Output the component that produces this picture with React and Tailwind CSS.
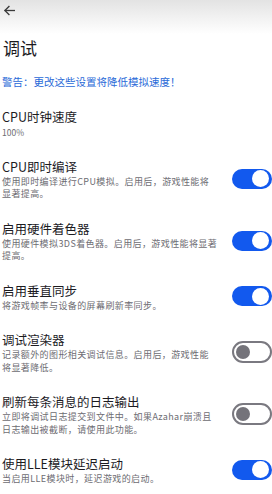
import React from 'react';

const items = [
    { title: 'CPU即时编译', desc: '使用即时编译进行CPU模拟。启用后，游戏性能将\n显著提高。', on: true },
    { title: '启用硬件着色器', desc: '使用硬件模拟3DS着色器。启用后，游戏性能将显著\n提高。', on: true },
    { title: '启用垂直同步', desc: '将游戏帧率与设备的屏幕刷新率同步。', on: true },
    { title: '调试渲染器', desc: '记录额外的图形相关调试信息。启用后，游戏性能\n将显著降低。', on: false },
    { title: '刷新每条消息的日志输出', desc: '立即将调试日志提交到文件中。如果Azahar崩溃且\n日志输出被截断，请使用此功能。', on: false },
    { title: '使用LLE模块延迟启动', desc: '当启用LLE模块时，延迟游戏的启动。', on: true },
];

function Toggle({ on }) {
    if (on) {
        return (
            <div className="w-[40px] h-[20px] shrink-0 rounded-full bg-[#1259ee] flex items-center justify-end pr-[3px]">
                <div className="w-[17px] h-[17px] rounded-full bg-white" />
            </div>
        );
    }
    return (
        <div className="w-[40px] h-[22px] shrink-0 rounded-full border-2 border-[#7a7980] flex items-center pl-[2px]">
            <div className="w-[14px] h-[14px] rounded-full bg-[#74737a]" />
        </div>
    );
}

export default function App() {
    return (
        <div
            className="w-[272px] h-[494px] overflow-hidden bg-white text-[#1c1b1f]"
            style={{ fontFamily: '"Noto Sans CJK SC", "Noto Sans", sans-serif' }}
        >
            <div className="h-[34px] bg-gradient-to-b from-[#e3e3e3] to-white pl-[3px] pt-[4px]">
                <svg width="13" height="13" viewBox="0 0 24 24" fill="none" stroke="#3a3a3a" strokeWidth="2.4" strokeLinecap="square">
                    <path d="M21 12H4" />
                    <path d="M11 4.5L3.5 12L11 19.5" />
                </svg>
            </div>

            <div className="mt-[3px] pl-[3px] text-[17px] leading-[22px]">调试</div>

            <div className="mt-[15px] pl-[2px] text-[10.5px] leading-[16px] text-[#2a6ad8]">
                警告：更改这些设置将降低模拟速度！
            </div>

            <div className="mt-[8px] pl-[2px] py-[9px]">
                <div className="text-[12.5px] leading-[19px]">CPU时钟速度</div>
                <div className="text-[8.5px] leading-[12.5px] text-[#6d6c72]">100%</div>
            </div>

            {items.map((item) => (
                <div key={item.title} className="flex items-center pl-[2px] py-[9px]">
                    <div className="flex-1 min-w-0">
                        <div className="text-[12.5px] leading-[19px]">{item.title}</div>
                        <div className="text-[9px] leading-[12.5px] tracking-[0.4px] text-[#6d6c72] whitespace-pre-line">
                            {item.desc}
                        </div>
                    </div>
                    <Toggle on={item.on} />
                </div>
            ))}
        </div>
    );
}
